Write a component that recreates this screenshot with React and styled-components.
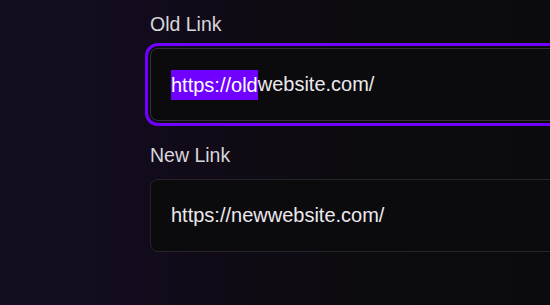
import React from "react";
import styled, { createGlobalStyle } from "styled-components";

const GlobalStyle = createGlobalStyle`
  html, body {
    margin: 0;
    padding: 0;
    overflow: hidden;
  }
  body {
    background: #0c0b0e;
    font-family: "Liberation Sans", Arial, sans-serif;
  }
`;

const Page = styled.div`
  width: 550px;
  height: 305px;
  overflow: hidden;
  background: linear-gradient(90deg, #140c20 0%, #130b1e 22%, #0f0b14 45%, #0c0b0e 70%, #0b0a0d 100%);
  padding: 13px 0 0 150px;
  box-sizing: border-box;
`;

const Form = styled.div`
  width: 480px;
  display: flex;
  flex-direction: column;
  gap: 23px;
`;

const Field = styled.div`
  display: flex;
  flex-direction: column;
  gap: 13px;
`;

const Label = styled.label`
  font-size: 19.5px;
  line-height: 22px;
  color: #d8d6dc;
`;

const TextBox = styled.div`
  height: 73px;
  box-sizing: border-box;
  display: flex;
  align-items: center;
  padding: 0 20px;
  background: #0b0a0d;
  border: 1px solid ${(p) => (p.focused ? "#34313a" : "#26242a")};
  border-radius: 8px;
  font-size: 20px;
  color: #ebe9ee;
  white-space: nowrap;
  outline: ${(p) => (p.focused ? "3px solid #7000ff" : "none")};
  outline-offset: 2px;
`;

const Selected = styled.span`
  display: inline-block;
  line-height: 30px;
  background: #7000ff;
  color: #ffffff;
`;

export default function App() {
  return (
    <>
      <GlobalStyle />
      <Page>
        <Form>
          <Field>
            <Label>Old Link</Label>
            <TextBox focused role="textbox">
              <Selected>https://old</Selected>
              website.com/
            </TextBox>
          </Field>
          <Field>
            <Label>New Link</Label>
            <TextBox role="textbox">https://newwebsite.com/</TextBox>
          </Field>
        </Form>
      </Page>
    </>
  );
}
